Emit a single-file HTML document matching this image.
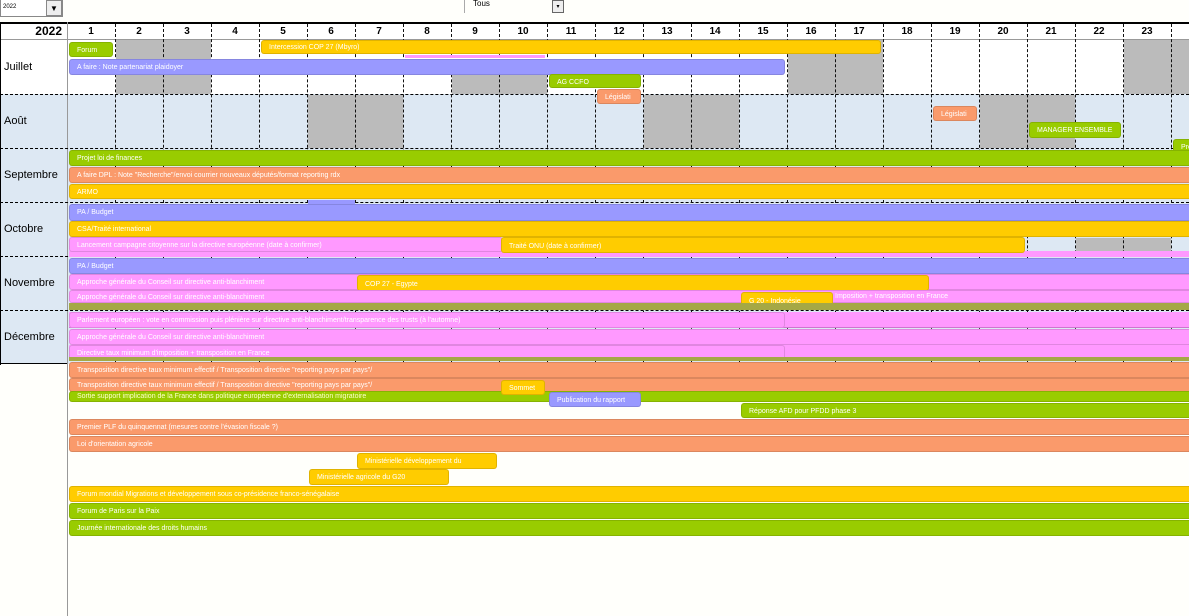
<!DOCTYPE html>
<html><head><meta charset="utf-8">
<style>
*{margin:0;padding:0;box-sizing:border-box}
body{width:1189px;height:616px;overflow:hidden;background:#fffffb;font-family:"Liberation Sans",sans-serif;position:relative}
.a{position:absolute}
.b{position:absolute;border-radius:3px;color:#fff;font-size:7px;line-height:15px;padding-left:7px;white-space:nowrap;overflow:hidden;border:1px solid rgba(0,0,0,.12)}
.g{background:#99cc00}.y{background:#ffcc00}.p{background:#9999ff}.s{background:#fa9a6b}.k{background:#ff99ff}
.grey{position:absolute;background:#bbbbbb}
.vl{position:absolute;width:0;border-left:1px dashed #111}
.hd{position:absolute;top:24px;height:15px;width:48px;text-align:center;font-size:10px;font-weight:bold;line-height:15px}
.m{position:absolute;left:4px;font-size:11px}
</style></head><body>
<div class="a" style="left:0;top:0;width:63px;height:17px;border:1px solid #888;border-top:none;background:#fff;font-size:6px;line-height:15px;padding-left:2px">2022</div>
<div class="a" style="left:46px;top:0;width:16px;height:16px;background:#eee;border:1px solid #888;font-size:8px;text-align:center;line-height:16px">▼</div>
<div class="a" style="left:464px;top:0;width:101px;height:13px;border-left:1px solid #aaa;font-size:8px;padding-left:8px;line-height:8px">Tous</div>
<div class="a" style="left:552px;top:0;width:12px;height:13px;background:#eee;border:1px solid #666;font-size:6px;text-align:center;line-height:12px">▾</div>

<div class="a" style="left:0;top:22px;width:1189px;height:72px;background:#fff"></div>
<div class="a" style="left:0;top:22px;width:1189px;height:2px;background:#000"></div>
<div class="a" style="left:0;top:39px;width:1189px;height:1px;background:#999"></div>
<div class="a" style="left:0;top:94px;width:1189px;height:270px;background:#dde8f3"></div>
<div class="a" style="left:0;top:22px;width:1px;height:343px;background:#000"></div>
<div class="a" style="left:0;top:363px;width:67px;height:1px;background:#000"></div>
<div class="a" style="left:67px;top:22px;width:1px;height:594px;background:#999"></div>
<div class="a" style="left:0;top:24px;width:62px;font-size:12px;font-weight:bold;text-align:right;line-height:15px">2022</div>

<div class="grey" style="left:116px;top:40px;width:95px;height:54px"></div>
<div class="grey" style="left:452px;top:74px;width:95px;height:20px"></div>
<div class="grey" style="left:788px;top:40px;width:95px;height:54px"></div>
<div class="grey" style="left:1124px;top:40px;width:65px;height:54px"></div>
<div class="grey" style="left:308px;top:95px;width:95px;height:53px"></div>
<div class="grey" style="left:644px;top:95px;width:95px;height:53px"></div>
<div class="grey" style="left:980px;top:95px;width:95px;height:53px"></div>
<div class="grey" style="left:1076px;top:238px;width:95px;height:13px"></div>

<div class="a" style="left:0;top:94px;width:1189px;border-top:1px dashed #000"></div>
<div class="a" style="left:0;top:148px;width:1189px;border-top:1px dashed #000"></div>
<div class="a" style="left:0;top:202px;width:1189px;border-top:1px dashed #000"></div>
<div class="a" style="left:0;top:256px;width:1189px;border-top:1px dashed #000"></div>
<div class="a" style="left:0;top:310px;width:1189px;border-top:1px dashed #000"></div>

<div class="vl" style="left:115px;top:24px;height:340px"></div><div class="vl" style="left:163px;top:24px;height:340px"></div><div class="vl" style="left:211px;top:24px;height:340px"></div><div class="vl" style="left:259px;top:24px;height:340px"></div><div class="vl" style="left:307px;top:24px;height:340px"></div><div class="vl" style="left:355px;top:24px;height:340px"></div><div class="vl" style="left:403px;top:24px;height:340px"></div><div class="vl" style="left:451px;top:24px;height:340px"></div><div class="vl" style="left:499px;top:24px;height:340px"></div><div class="vl" style="left:547px;top:24px;height:340px"></div><div class="vl" style="left:595px;top:24px;height:340px"></div><div class="vl" style="left:643px;top:24px;height:340px"></div><div class="vl" style="left:691px;top:24px;height:340px"></div><div class="vl" style="left:739px;top:24px;height:340px"></div><div class="vl" style="left:787px;top:24px;height:340px"></div><div class="vl" style="left:835px;top:24px;height:340px"></div><div class="vl" style="left:883px;top:24px;height:340px"></div><div class="vl" style="left:931px;top:24px;height:340px"></div><div class="vl" style="left:979px;top:24px;height:340px"></div><div class="vl" style="left:1027px;top:24px;height:340px"></div><div class="vl" style="left:1075px;top:24px;height:340px"></div><div class="vl" style="left:1123px;top:24px;height:340px"></div><div class="vl" style="left:1171px;top:24px;height:340px"></div>

<div class="hd" style="left:67px">1</div><div class="hd" style="left:115px">2</div><div class="hd" style="left:163px">3</div><div class="hd" style="left:211px">4</div><div class="hd" style="left:259px">5</div><div class="hd" style="left:307px">6</div><div class="hd" style="left:355px">7</div><div class="hd" style="left:403px">8</div><div class="hd" style="left:451px">9</div><div class="hd" style="left:499px">10</div><div class="hd" style="left:547px">11</div><div class="hd" style="left:595px">12</div><div class="hd" style="left:643px">13</div><div class="hd" style="left:691px">14</div><div class="hd" style="left:739px">15</div><div class="hd" style="left:787px">16</div><div class="hd" style="left:835px">17</div><div class="hd" style="left:883px">18</div><div class="hd" style="left:931px">19</div><div class="hd" style="left:979px">20</div><div class="hd" style="left:1027px">21</div><div class="hd" style="left:1075px">22</div><div class="hd" style="left:1123px">23</div>

<div class="a" style="left:1px;top:40px;width:66px;height:54px;background:#fff"></div>
<div class="m" style="top:61px">Juillet</div>
<div class="m" style="top:115px">Août</div>
<div class="m" style="top:169px">Septembre</div>
<div class="m" style="top:223px">Octobre</div>
<div class="m" style="top:277px">Novembre</div>
<div class="m" style="top:331px">Décembre</div>

<div class="b g" style="left:69px;top:42px;width:44px;height:15px">Forum</div>
<div class="b y" style="left:261px;top:40px;width:620px;height:14px;line-height:13px">Intercession COP 27  (Mbyro)</div>
<div class="a k" style="left:405px;top:55px;width:140px;height:3px"></div>
<div class="b p" style="left:69px;top:59px;width:716px;height:16px">A faire : Note partenariat plaidoyer</div>
<div class="b g" style="left:549px;top:74px;width:92px;height:14px">AG CCFO</div>
<div class="b s" style="left:597px;top:89px;width:44px;height:15px">Législati</div>
<div class="b s" style="left:933px;top:106px;width:44px;height:15px">Législati</div>
<div class="b g" style="left:1029px;top:122px;width:92px;height:16px">MANAGER ENSEMBLE</div>
<div class="b g" style="left:1173px;top:139px;width:20px;height:15px">Pro</div>

<div class="b g" style="left:69px;top:150px;width:1125px;height:16px">Projet loi de finances</div>
<div class="b s" style="left:69px;top:167px;width:1125px;height:16px">A faire DPL : Note "Recherche"/envoi courrier nouveaux députés/format reporting rdx</div>
<div class="b y" style="left:69px;top:184px;width:1125px;height:15px">ARMO</div>

<div class="a p" style="left:308px;top:200px;width:47px;height:4px"></div>
<div class="b p" style="left:69px;top:204px;width:1125px;height:17px">PA / Budget</div>
<div class="b y" style="left:69px;top:221px;width:1125px;height:16px">CSA/Traité international</div>
<div class="a k" style="left:69px;top:251px;width:1125px;height:6px"></div>
<div class="b k" style="left:69px;top:237px;width:434px;height:15px">Lancement campagne citoyenne sur la directive européenne (date à confirmer)</div>
<div class="b y" style="left:501px;top:237px;width:524px;height:16px;line-height:18px">Traité ONU  (date à confirmer)</div>

<div class="b p" style="left:69px;top:258px;width:1125px;height:16px">PA / Budget</div>
<div class="b k" style="left:69px;top:274px;width:1125px;height:16px">Approche générale du Conseil sur directive anti-blanchiment</div>
<div class="b y" style="left:357px;top:275px;width:572px;height:16px;line-height:17px">COP 27 - Egypte</div>
<div class="b k" style="left:69px;top:290px;width:1125px;height:13px;line-height:13px">Approche générale du Conseil sur directive anti-blanchiment</div>
<div class="a" style="left:835px;top:293px;font-size:7px;color:#fff">Imposition + transposition en France</div>
<div class="b y" style="left:741px;top:292px;width:92px;height:15px;line-height:17px">G 20 - Indonésie</div>
<div class="a" style="left:69px;top:303px;width:1125px;height:7px;background:#a5a845"></div>

<div class="a k" style="left:69px;top:312px;width:1125px;height:16px;border-bottom:1px solid #c7c"></div>
<div class="b k" style="left:69px;top:312px;width:716px;height:16px">Parlement européen : vote en commission puis plénière sur directive anti-blanchiment/transparence des trusts (à l'automne)</div>
<div class="b k" style="left:69px;top:329px;width:1125px;height:16px">Approche générale du Conseil sur directive anti-blanchiment</div>
<div class="a k" style="left:69px;top:345px;width:1125px;height:12px"></div>
<div class="b k" style="left:69px;top:345px;width:716px;height:15px">Directive taux minimum d'imposition + transposition en France</div>
<div class="a" style="left:69px;top:357px;width:1125px;height:4px;background:#a5a845"></div>

<div class="b s" style="left:69px;top:362px;width:1125px;height:16px">Transposition directive taux minimum effectif / Transposition directive "reporting pays par pays"/</div>
<div class="b s" style="left:69px;top:378px;width:1125px;height:14px;line-height:13px">Transposition directive taux minimum effectif / Transposition directive "reporting pays par pays"/</div>
<div class="b g" style="left:69px;top:391px;width:1125px;height:11px;line-height:9px;color:#ffffcc">Sortie support implication de la France dans politique européenne d'externalisation migratoire</div>
<div class="b y" style="left:501px;top:380px;width:44px;height:15px">Sommet</div>
<div class="b p" style="left:549px;top:392px;width:92px;height:15px">Publication du rapport</div>
<div class="b g" style="left:741px;top:403px;width:453px;height:15px">Réponse AFD pour PFDD phase 3</div>
<div class="b s" style="left:69px;top:419px;width:1125px;height:16px">Premier PLF du quinquennat (mesures contre l'évasion fiscale ?)</div>
<div class="b s" style="left:69px;top:436px;width:1125px;height:16px">Loi d'orientation agricole</div>
<div class="b y" style="left:357px;top:453px;width:140px;height:16px">Ministérielle développement du</div>
<div class="b y" style="left:309px;top:469px;width:140px;height:16px">Ministérielle agricole du G20</div>
<div class="b y" style="left:69px;top:486px;width:1125px;height:16px">Forum mondial Migrations et développement sous co-présidence franco-sénégalaise</div>
<div class="b g" style="left:69px;top:503px;width:1125px;height:16px">Forum de Paris sur la Paix</div>
<div class="b g" style="left:69px;top:520px;width:1125px;height:16px">Journée internationale des droits humains</div>
</body></html>
